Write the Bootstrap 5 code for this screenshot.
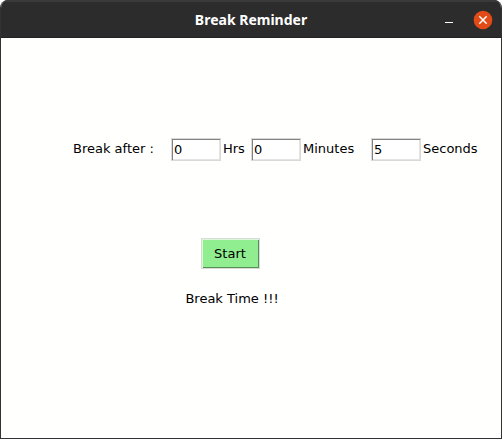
<!DOCTYPE html>
<html lang="en">
<head>
<meta charset="utf-8">
<meta name="viewport" content="width=device-width, initial-scale=1">
<title>Break Reminder</title>
<link href="https://cdn.jsdelivr.net/npm/bootstrap@5.3.0/dist/css/bootstrap.min.css" rel="stylesheet">
<style>
  body { font-family: "DejaVu Sans", sans-serif; font-size: 13px; line-height: 20px; color: #000; background: #fff; }
  .app-window { border: 1px solid #323232; border-top: 0; border-radius: 8px 8px 0 0; background: #fffffe; overflow: hidden; }
  .title-bar { display: grid; grid-template-columns: 1fr auto 1fr; height: 38px; background: #2c2c2c; border-top: 2px solid #3a3a3a; border-bottom: 1px solid #222; color: #fff; }
  .title-bar h1 { font: bold 14px/20px "Noto Sans", sans-serif; }
  .win-btn { width: 20px; height: 20px; }
  .timer-form { padding: 100px 16px 0 72px; }
  .time-fields { display: grid; grid-template-columns: 98px 80px 120px auto; justify-content: start; line-height: 22px; }
  .field { display: flex; gap: 2px; }
  .tk-input { width: 50px; height: 23px; padding: 0 2px; border: 1px solid #d9d9d9; background: #fff; color: #000; box-shadow: inset 1px 1px #828282, inset -1px -1px #e4e4e4; }
  .actions { width: 174px; margin: 77px 0 0 70px; }
  .start-btn { width: 59px; height: 31px; border: 1px solid #d9d9d9; padding: 0; font-size: 13px; background: #90ee90; color: #000; box-shadow: inset 1px 1px #d8f8d8, inset -1px -1px #569056; }
</style>
<script src="https://cdn.jsdelivr.net/npm/bootstrap@5.3.0/dist/js/bootstrap.bundle.min.js" defer></script>
</head>
<body>
<div class="app-window min-vh-100">
  <header class="title-bar align-items-center">
    <span></span>
    <h1 class="m-0">Break Reminder</h1>
    <div class="d-flex justify-content-end align-items-center gap-3 pe-2">
      <button type="button" class="win-btn btn p-0 border-0 d-flex" aria-label="Minimize">
        <svg width="20" height="20" viewBox="0 0 20 20"><path d="M8 12.5h8" stroke="#fff" stroke-width="1"/></svg>
      </button>
      <button type="button" class="win-btn btn p-0 border-0 d-flex" aria-label="Close">
        <svg width="20" height="20" viewBox="0 0 20 20"><circle cx="10" cy="10" r="9.3" fill="#e24a18"/><path d="M6.3 6.3l7.4 7.4M13.7 6.3l-7.4 7.4" stroke="#fff" stroke-width="1.5"/></svg>
      </button>
    </div>
  </header>
  <main>
    <form class="timer-form">
      <div class="time-fields">
        <label for="hrs">Break after :</label>
        <div class="field"><input id="hrs" class="tk-input" type="text" value="0"><label for="hrs">Hrs</label></div>
        <div class="field"><input id="mins" class="tk-input" type="text" value="0"><label for="mins">Minutes</label></div>
        <div class="field"><input id="secs" class="tk-input" type="text" value="5"><label for="secs">Seconds</label></div>
      </div>
      <div class="actions d-flex flex-column align-items-center">
        <button type="button" class="start-btn btn rounded-0">Start</button>
        <output class="mt-3 pt-1 ps-1">Break Time !!!</output>
      </div>
    </form>
  </main>
</div>
</body>
</html>
